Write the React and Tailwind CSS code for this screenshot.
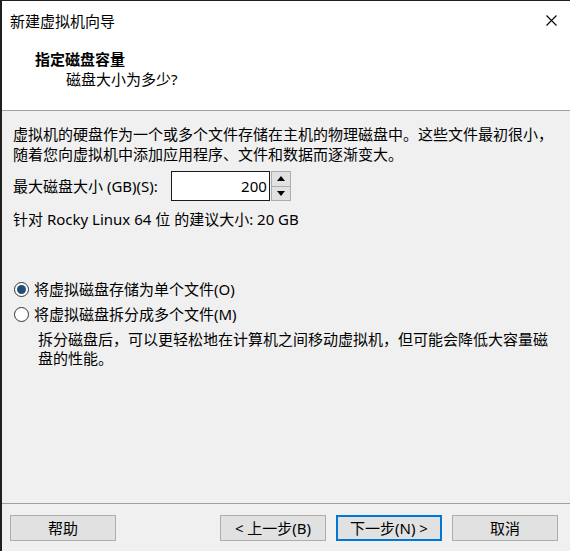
import React from "react";

const font = { fontFamily: '"Noto Sans", "Noto Sans CJK SC", sans-serif' };

function Radio({ checked, label }) {
  return (
    <div className="flex items-center h-[20px]">
      <span className="ml-[12px] w-[15px] h-[15px] rounded-full border border-[#333333] bg-white flex items-center justify-center">
        {checked && <span className="w-[9px] h-[9px] rounded-full bg-[#1f4e79]" />}
      </span>
      <span className="ml-[5px]">{label}</span>
    </div>
  );
}

function Btn({ children, primary }) {
  return (
    <div
      className={
        "w-[106px] h-[26px] flex items-center justify-center bg-[#e1e1e1] " +
        (primary ? "border-2 border-[#0078d7]" : "border border-[#adadad]")
      }
    >
      {children}
    </div>
  );
}

export default function App() {
  return (
    <div
      className="w-[570px] h-[551px] bg-[#f0f0f0] border-t border-l-2 border-[#1f1f1f] flex flex-col text-[15px] text-black leading-[20px] overflow-hidden"
      style={font}
    >
      <div className="bg-white flex flex-col h-[109px]">
        <div className="h-[39px] flex items-center justify-between pl-[8px] pr-[13px]">
          <span className="leading-[20px]">新建虚拟机向导</span>
          <svg width="11" height="11" viewBox="0 0 11 11">
            <path d="M0.5 0.5 L10.5 10.5 M10.5 0.5 L0.5 10.5" stroke="#000" strokeWidth="1.1" fill="none" />
          </svg>
        </div>
        <div className="pt-[9px] pl-[33px] font-bold">指定磁盘容量</div>
        <div className="pl-[64px]">磁盘大小为多少?</div>
      </div>
      <div className="h-px bg-[#a0a0a0]" />
      <div className="flex-1 flex flex-col pl-[11px] pt-[13px]">
        <div>虚拟机的硬盘作为一个或多个文件存储在主机的物理磁盘中。这些文件最初很小，</div>
        <div>随着您向虚拟机中添加应用程序、文件和数据而逐渐变大。</div>
        <div className="flex items-center mt-[7px] h-[30px]">
          <span>最大磁盘大小 (GB)(S):</span>
          <div className="ml-[13px] w-[99px] h-[30px] border border-[#1a1a1a] bg-white flex items-center justify-end pr-[2px]">
            200
          </div>
          <div className="ml-[1px] w-[20px] h-[30px] flex flex-col border border-[#adadad] bg-[#f0f0f0]">
            <div className="flex-1 flex items-center justify-center bg-[#e1e1e1] border-b border-[#adadad]">
              <svg width="8" height="5" viewBox="0 0 8 5"><path d="M0 5 L4 0 L8 5 Z" fill="#000" /></svg>
            </div>
            <div className="flex-1 flex items-center justify-center bg-[#e1e1e1]">
              <svg width="8" height="5" viewBox="0 0 8 5"><path d="M0 0 L8 0 L4 5 Z" fill="#000" /></svg>
            </div>
          </div>
        </div>
        <div className="mt-[8px]">针对 Rocky Linux 64 位 的建议大小: 20 GB</div>
        <div className="-ml-[11px] mt-[50px]">
          <Radio checked label="将虚拟磁盘存储为单个文件(O)" />
        </div>
        <div className="-ml-[11px] mt-[5px]">
          <Radio label="将虚拟磁盘拆分成多个文件(M)" />
        </div>
        <div className="mt-[6px] pl-[25px] leading-[19px]">
          <div>拆分磁盘后，可以更轻松地在计算机之间移动虚拟机，但可能会降低大容量磁</div>
          <div>盘的性能。</div>
        </div>
      </div>
      <div className="h-px bg-[#a0a0a0]" />
      <div className="h-[47px] flex items-start pt-[11px] pl-[8px]">
        <Btn>帮助</Btn>
        <div className="ml-[104px] flex gap-[10px]">
          <Btn>&lt; 上一步(B)</Btn>
          <Btn primary>下一步(N) &gt;</Btn>
          <Btn>取消</Btn>
        </div>
      </div>
    </div>
  );
}
